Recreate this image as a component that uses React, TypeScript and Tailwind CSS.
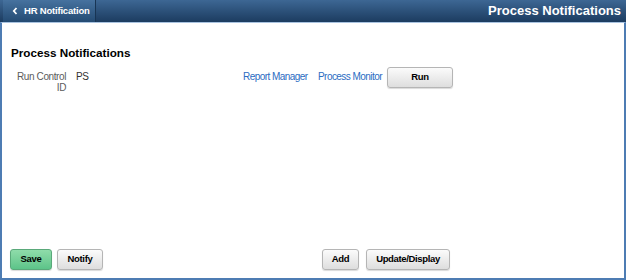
import React from "react"

const btn =
  "h-[21px] rounded-[3px] border border-[#b5b5b5] bg-gradient-to-b from-[#fbfbfb] to-[#dedede] text-[9.5px] font-bold tracking-[-0.35px] text-black shadow-[0_1px_1px_rgba(0,0,0,0.15)]"

export default function App() {
  return (
    <div className="flex h-[280px] w-[626px] flex-col bg-white font-['Liberation_Sans',Arial,sans-serif]">
      {/* Barra superior */}
      <div className="flex h-[22px] items-stretch justify-between bg-gradient-to-b from-[#3d6794] to-[#1c3c60]">
        <div className="ml-[3px] flex w-[93px] items-center gap-[6px] border-r border-[#183554] bg-gradient-to-b from-[#46729f] to-[#244b73] pl-[9px] text-[9.5px] font-bold tracking-[-0.2px] text-white">
          <svg width="6" height="8" viewBox="0 0 6 8">
            <path d="M4.5 1 L1.8 4 L4.5 7" stroke="white" strokeWidth="1.8" fill="none" />
          </svg>
          HR Notification
        </div>
        <div className="flex items-center pr-[5px] text-[13px] font-bold text-white">Process Notifications</div>
      </div>

      {/* Contenido */}
      <div className="flex flex-1 flex-col border-x-2 border-b-2 border-t border-x-[#4d7cb3] border-b-[#4d7cb3] border-t-[#a9c3e0]">
        <div className="pl-[9px] pt-[21px] text-[11.7px] font-bold text-black">Process Notifications</div>

        <div className="mt-[9px] flex items-start text-[10px] tracking-[-0.4px]">
          <div className="w-[64px] text-right leading-[11px] text-[#5c5c5c]">
            Run Control
            <br />
            ID
          </div>
          <div className="ml-[10px] w-[167px] leading-[11px] text-[#333]">PS</div>
          <a className="w-[75px] leading-[11px] tracking-[-0.55px] text-[#2b6cc2]">Report Manager</a>
          <a className="w-[69px] leading-[11px] tracking-[-0.55px] text-[#2b6cc2]">Process Monitor</a>
          <button className={`${btn} -mt-[4px] w-[66px]`}>Run</button>
        </div>

        <div className="mt-auto mb-[8px] flex items-center">
          <button className="ml-[8px] h-[21px] w-[42px] rounded-[3px] border border-[#5aa97a] bg-gradient-to-b from-[#8fdcaa] to-[#5cc489] text-[9.5px] font-bold tracking-[-0.35px] text-black shadow-[0_1px_1px_rgba(0,0,0,0.15)]">
            Save
          </button>
          <button className={`${btn} ml-[5px] w-[46px]`}>Notify</button>
          <button className={`${btn} ml-[219px] w-[37px]`}>Add</button>
          <button className={`${btn} ml-[7px] w-[84px]`}>Update/Display</button>
        </div>
      </div>
    </div>
  )
}
